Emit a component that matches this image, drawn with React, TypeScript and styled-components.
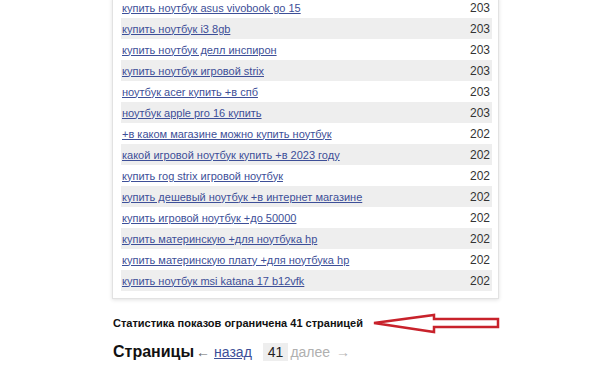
import React from "react";
import styled, { createGlobalStyle } from "styled-components";

const Global = createGlobalStyle`
  html, body { margin: 0; padding: 0; background: #fff; }
  body { font-family: Arial, "Liberation Sans", sans-serif; overflow: hidden; }
`;

const Page = styled.div`
  width: 600px;
  height: 377px;
  padding-left: 112px;
  box-sizing: border-box;
  overflow: hidden;
`;

const Card = styled.div`
  width: 387px;
  box-sizing: border-box;
  margin-top: -3px;
  padding: 0 6px 7px 8px;
  border: 1px solid #e2e2e2;
  border-top: none;
  background: #fff;
  box-shadow: 0 1px 4px rgba(0, 0, 0, 0.12);
`;

const Row = styled.div<{ $alt: boolean }>`
  display: flex;
  align-items: center;
  justify-content: space-between;
  height: 21px;
  padding: 0 2px 0 1px;
  background: ${(p) => (p.$alt ? "#eeeeee" : "transparent")};
`;

const Phrase = styled.a`
  font-size: 11px;
  color: #3d4f98;
  text-decoration: underline;
  cursor: pointer;
`;

const Count = styled.span`
  font-size: 12px;
  color: #333;
`;

const StatLine = styled.div`
  display: flex;
  align-items: center;
  height: 22px;
  margin-top: 13px;
  padding-left: 1px;
`;

const StatText = styled.span`
  font-size: 11px;
  font-weight: bold;
  color: #111;
  margin-right: 9px;
`;

const Pager = styled.div`
  display: flex;
  align-items: center;
  height: 20px;
  margin-top: 8px;
  padding-left: 1px;
  font-size: 14px;
`;

const PagerTitle = styled.span`
  font-weight: bold;
  font-size: 16px;
  color: #111;
  margin-right: 2px;
`;

const Arrow = styled.span<{ $dim?: boolean }>`
  color: ${(p) => (p.$dim ? "#b5b5b5" : "#666")};
  font-size: 14px;
  margin: 0 4px 0 ${(p) => (p.$dim ? "6px" : "0")};
`;

const PagerLink = styled.a`
  color: #3d4f98;
  text-decoration: underline;
  margin-right: 11px;
  cursor: pointer;
`;

const Current = styled.span`
  background: #eeeeee;
  padding: 1px 5px;
  color: #222;
  margin-right: 2px;
`;

const Disabled = styled.span`
  color: #b0b0b0;
`;

const rows: [string, number][] = [
  ["купить ноутбук asus vivobook go 15", 203],
  ["купить ноутбук i3 8gb", 203],
  ["купить ноутбук делл инспирон", 203],
  ["купить ноутбук игровой strix", 203],
  ["ноутбук acer купить +в спб", 203],
  ["ноутбук apple pro 16 купить", 203],
  ["+в каком магазине можно купить ноутбук", 202],
  ["какой игровой ноутбук купить +в 2023 году", 202],
  ["купить rog strix игровой ноутбук", 202],
  ["купить дешевый ноутбук +в интернет магазине", 202],
  ["купить игровой ноутбук +до 50000", 202],
  ["купить материнскую +для ноутбука hp", 202],
  ["купить материнскую плату +для ноутбука hp", 202],
  ["купить ноутбук msi katana 17 b12vfk", 202],
];

export default function App() {
  return (
    <>
      <Global />
      <Page>
        <Card>
          {rows.map(([p, n], i) => (
            <Row key={i} $alt={i % 2 === 1}>
              <Phrase>{p}</Phrase>
              <Count>{n}</Count>
            </Row>
          ))}
        </Card>
        <StatLine>
          <StatText>Статистика показов ограничена 41 страницей</StatText>
          <svg width="128" height="22" viewBox="0 0 128 22">
            <polygon
              points="2,11 62,3 62,7 126,7 126,15 62,15 62,20"
              fill="#fff"
              stroke="#c8222b"
              strokeWidth="2.5"
              strokeLinejoin="miter"
            />
          </svg>
        </StatLine>
        <Pager>
          <PagerTitle>Страницы</PagerTitle>
          <Arrow>←</Arrow>
          <PagerLink>назад</PagerLink>
          <Current>41</Current>
          <Disabled>далее</Disabled>
          <Arrow $dim>→</Arrow>
        </Pager>
      </Page>
    </>
  );
}
